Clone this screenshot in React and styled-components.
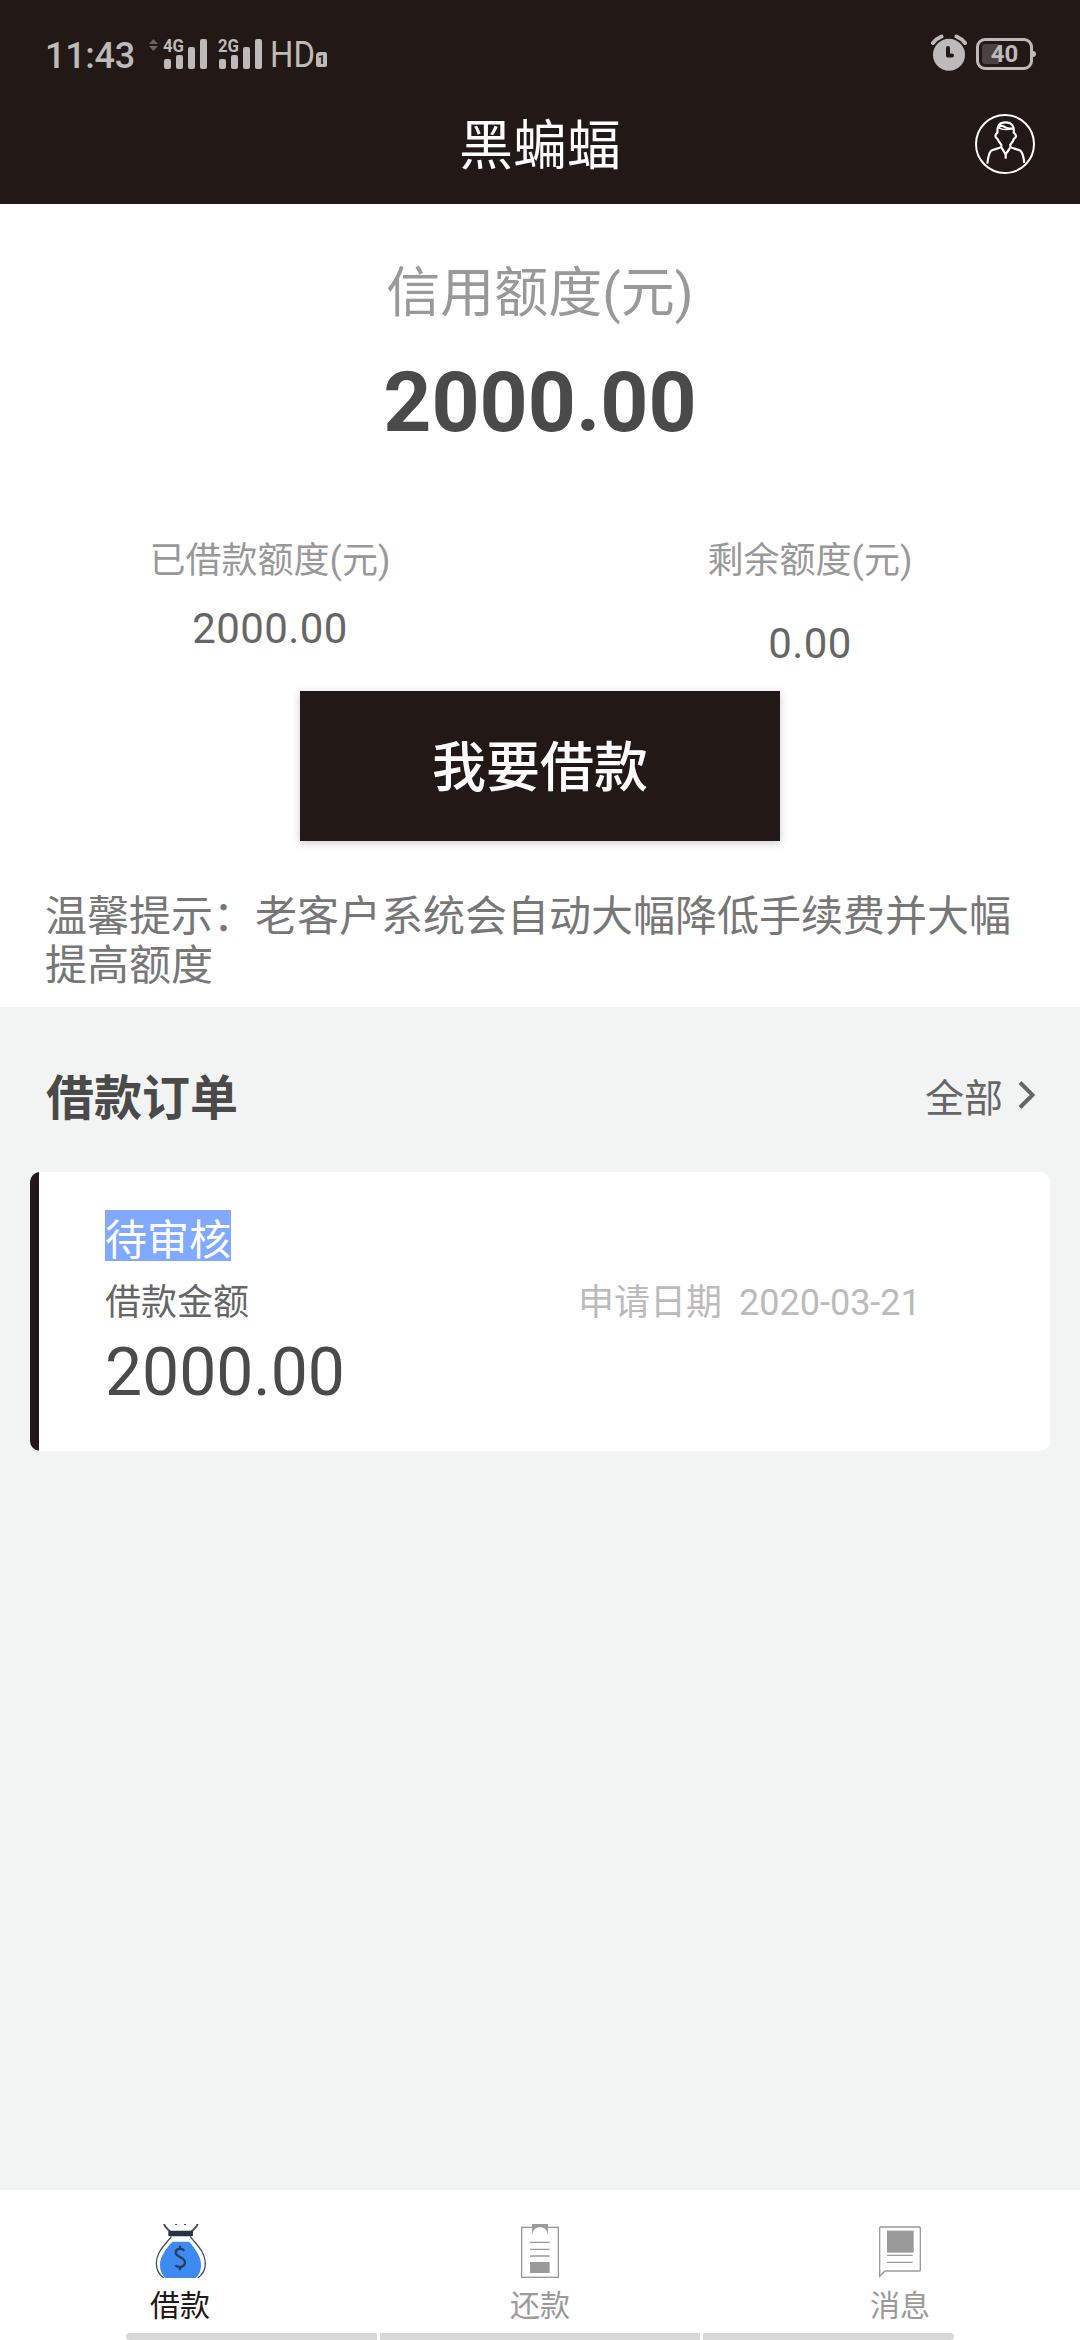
import React from "react";
import styled, { createGlobalStyle } from "styled-components";

const orders = [
  {
    status: "待审核",
    label: "借款金额",
    amount: "2000.00",
    dateLabel: "申请日期",
    date: "2020-03-21"
  }
];

const ProfileIcon = () => (
  <svg width="60" height="60" viewBox="225 282 180 180" fill="none" stroke="#fff">
    <circle cx="315" cy="372" r="87" strokeWidth="6" />
    <g strokeWidth="6.500" strokeLinejoin="round">
      <path d="M293 340 C289 316 300 307 317 307 C335 307 344 318 341 340" />
      <path d="M294 325 C299 315 308 316 316 322 C324 327 333 326 341 325" />
      <path d="M294 323 C303 328 320 331 341 326" strokeWidth="4" />
      <path d="M293 338 C283 344 285 353 292 356 C295 364 300 370 304 374 V382 L317 403 L331 382 V374 C336 369 340 363 342 356 C350 352 350 344 341 338" />
      <path d="M304 381 C296 387 284 386 274 392 C266 398 264 412 262 431" />
      <path d="M331 381 C339 387 351 386 361 392 C369 398 371 412 373 429" />
      <path d="M317 400 V416" />
    </g>
  </svg>
);

const SignalIcon = ({ label }) => (
  <svg width="45" height="36" viewBox="0 -4 45 36" fill="#bdbab9">
    <text
      x="0"
      y="13.5"
      fontSize="17.5"
      fontWeight="700"
      fontFamily="Roboto, sans-serif"
      textLength="21"
      lengthAdjust="spacingAndGlyphs"
    >
      {label}
    </text>
    <rect x="1" y="21" width="7" height="10" rx="2" />
    <rect x="13" y="17" width="7" height="14" rx="2" />
    <rect x="25" y="9" width="7" height="22" rx="2" />
    <rect x="37" y="1" width="7" height="30" rx="2" />
  </svg>
);

const DataArrows = () => (
  <svg width="9" height="12" viewBox="0 0 9 12" fill="#6a6462">
    <path d="M0 5 L4.5 0 L9 5 Z M0 7 H9 L4.5 12 Z" />
  </svg>
);

const HdIcon = () => (
  <svg width="54" height="46" viewBox="0 0 54 46" fill="#bdbab9">
    <text
      x="1"
      y="34"
      fontSize="36"
      fontFamily="Roboto, sans-serif"
      textLength="45"
      lengthAdjust="spacingAndGlyphs"
    >
      HD
    </text>
  </svg>
);

const AlarmIcon = () => (
  <svg width="36" height="38" viewBox="0 0 36 38">
    <circle cx="18" cy="20.7" r="16" fill="#bdbab9" />
    <path
      d="M2 9 Q5.500 4.500 10.500 2.500 M25.500 2.500 Q30.500 4.500 34 9"
      fill="none"
      stroke="#bdbab9"
      strokeWidth="4"
      strokeLinecap="round"
    />
    <path
      d="M17 14 V21.500 H21"
      fill="none"
      stroke="#221815"
      strokeWidth="4"
      strokeLinecap="round"
      strokeLinejoin="round"
    />
  </svg>
);

const ChevronIcon = () => (
  <svg width="18" height="28" viewBox="0 0 18 28" fill="none" stroke="#666" strokeWidth="4">
    <path d="M2 1.500 L14.500 14 L2 26.500" />
  </svg>
);

const BagIcon = () => (
  <svg width="54" height="54" viewBox="129 162 162 162">
    <path
      d="M187 215 H238 C256 238 273 258 273 284 C273 304 266 317 257 324 H167 C157 316 150 303 150 284 C150 258 168 238 187 215 Z"
      fill="#3d8bf2"
    />
    <g fill="none" stroke="#4a5058" strokeWidth="4">
      <path d="M184 200 C164 226 139 246 139 280 C139 302 148 315 162 324" />
      <path d="M241 200 C261 226 286 246 286 280 C286 302 277 315 263 324" />
      <path d="M162 162 C165 173 172 176 180 184 M263 162 C260 173 253 176 245 184" strokeWidth="6" />
      <path d="M195 163 H201 M222 163 H228" />
    </g>
    <rect x="175" y="182" width="74" height="17" rx="3" fill="#263442" />
    <path
      d="M223 242 C217 235 199 234 197 246 C196 263 226 259 225 279 C223 293 203 294 196 286 M210 227 V238 M210 290 V301"
      fill="none"
      stroke="#263c5c"
      strokeWidth="7"
    />
  </svg>
);

const ClipboardIcon = () => (
  <svg width="54" height="54" viewBox="99 162 162 162">
    <rect x="125" y="172" width="110" height="150" fill="none" stroke="#9a9a9a" strokeWidth="4" />
    <path d="M156 162 H204 V195 C202 180 192 171 180 171 C168 171 158 180 156 195 Z" fill="#9a9a9a" />
    <path d="M160 187 C163 176 171 172 180 172 C189 172 197 176 200 187 Z" fill="#fff" />
    <path d="M150 217 H209 M150 238 H209 M150 258 H209" stroke="#9a9a9a" strokeWidth="4" />
    <rect x="150" y="276" width="59" height="33" fill="#9a9a9a" />
  </svg>
);

const MessageIcon = () => (
  <svg width="54" height="54" viewBox="1179 162 162 162">
    <path
      d="M1199 319 V174 Q1199 171 1202 171 H1318 Q1321 171 1321 174 V300 Q1321 303 1318 303 H1215 Z"
      fill="none"
      stroke="#9a9a9a"
      strokeWidth="4"
    />
    <rect x="1221" y="182" width="80" height="66" fill="#9a9a9a" />
    <path d="M1221 256 H1298 M1221 277 H1298" stroke="#9a9a9a" strokeWidth="4" />
  </svg>
);

const tabs = [
  { title: "借款", icon: <BagIcon />, active: true },
  { title: "还款", icon: <ClipboardIcon /> },
  { title: "消息", icon: <MessageIcon /> }
];

const App = () => (
  <Page>
    <GlobalStyle />
    <StatusBar>
      <Clock>11:43</Clock>
      <Arrows>
        <DataArrows />
      </Arrows>
      <Signals>
        <SignalIcon label="4G" />
        <SignalIcon label="2G" />
      </Signals>
      <HdLabel>
        <HdIcon />
      </HdLabel>
      <SimBadge>1</SimBadge>
      <StatusRight>
        <AlarmIcon />
        <Battery>
          <BatteryLevel>40</BatteryLevel>
        </Battery>
      </StatusRight>
    </StatusBar>
    <Header>
      <span />
      <HeaderTitle>黑蝙蝠</HeaderTitle>
      <ProfileButton>
        <ProfileIcon />
      </ProfileButton>
    </Header>

    <Summary>
      <CreditLabel>信用额度(元)</CreditLabel>
      <CreditAmount>2000.00</CreditAmount>
      <Split>
        <SplitItem>
          <SplitLabel>已借款额度(元)</SplitLabel>
          <SplitValue>2000.00</SplitValue>
        </SplitItem>
        <SplitItem>
          <SplitLabel>剩余额度(元)</SplitLabel>
          <SplitValue $low>0.00</SplitValue>
        </SplitItem>
      </Split>
      <BorrowButton>我要借款</BorrowButton>
      <Notice>温馨提示：老客户系统会自动大幅降低手续费并大幅提高额度</Notice>
    </Summary>

    <Orders>
      <OrdersHeader>
        <OrdersTitle>借款订单</OrdersTitle>
        <AllLink>
          全部
          <ChevronIcon />
        </AllLink>
      </OrdersHeader>
      {orders.map(order => (
        <OrderCard key={order.date}>
          <OrderStatus>{order.status}</OrderStatus>
          <OrderRow>
            <OrderLabel>{order.label}</OrderLabel>
            <OrderDate>
              <span>{order.dateLabel}</span>
              <span>{order.date}</span>
            </OrderDate>
          </OrderRow>
          <OrderAmount>{order.amount}</OrderAmount>
        </OrderCard>
      ))}
    </Orders>

    <TabBar>
      {tabs.map(tab => (
        <Tab key={tab.title} $active={tab.active}>
          {tab.icon}
          <TabTitle>{tab.title}</TabTitle>
        </Tab>
      ))}
    </TabBar>
    <GestureBar>
      <GestureHint $left />
      <GestureHint />
      <GestureHint $right />
    </GestureBar>
  </Page>
);

const GlobalStyle = createGlobalStyle`
  body {
    margin: 0;
    background: #f2f4f3;
    font-family: Roboto, "Noto Sans CJK SC", sans-serif;
  }

  svg {
    display: block;
    flex: none;
  }
`;

const Page = styled.div`
  width: 1080px;
  height: 2340px;
  display: flex;
  flex-direction: column;
  overflow: hidden;
  background: #f2f4f3;
`;

const StatusBar = styled.div`
  height: 84px;
  box-sizing: border-box;
  padding: 0 45px;
  display: flex;
  align-items: flex-start;
  background: #221815;
  color: #bdbab9;
`;

const Clock = styled.div`
  width: 90px;
  margin-top: 35px;
  font-size: 36px;
  font-weight: 500;
  line-height: 42px;
  letter-spacing: -0.3px;
`;

const Arrows = styled.div`
  margin: 39px 0 0 14px;
`;

const Signals = styled.div`
  margin: 34px 0 0 5px;
  display: flex;
  gap: 10px;
`;

const HdLabel = styled.div`
  margin: 33px -7px 0 6px;
`;

const SimBadge = styled.div`
  width: 11px;
  height: 15px;
  margin-top: 52px;
  border-radius: 4px 2px 2px 2px;
  background: #bdbab9;
  color: #221815;
  font-size: 13px;
  font-weight: 700;
  line-height: 15px;
  text-align: center;
`;

const StatusRight = styled.div`
  margin: 34px 0 0 auto;
  display: flex;
  align-items: flex-start;
  gap: 9px;
`;

const Battery = styled.div`
  position: relative;
  box-sizing: border-box;
  width: 57px;
  height: 32px;
  margin: 4px 2px 0 0;
  padding: 3px;
  border: 3px solid #bdbab9;
  border-radius: 9px;

  &:after {
    content: "";
    position: absolute;
    right: -6px;
    top: 10px;
    width: 4px;
    height: 6px;
    border-radius: 0 3px 3px 0;
    background: #bdbab9;
  }
`;

const BatteryLevel = styled.div`
  height: 20px;
  border-radius: 3px;
  background: linear-gradient(to right, #4a4341 17px, transparent 17px);
  font-size: 24px;
  font-weight: 700;
  line-height: 21px;
  text-align: center;
`;

const Header = styled.div`
  height: 120px;
  box-sizing: border-box;
  padding: 0 45px;
  display: grid;
  grid-template-columns: 1fr auto 1fr;
  align-items: center;
  background: #221815;
`;

const HeaderTitle = styled.div`
  padding-top: 5px;
  color: #fff;
  font-size: 54px;
  line-height: 64px;
`;

const ProfileButton = styled.div`
  justify-self: end;
`;

const Summary = styled.div`
  height: 803px;
  box-sizing: border-box;
  padding: 58px 45px 0;
  background: #fff;
  text-align: center;
`;

const CreditLabel = styled.div`
  color: #999;
  font-size: 54px;
  line-height: 64px;
`;

const CreditAmount = styled.div`
  margin-top: 28px;
  color: #4a4a4a;
  font-size: 84px;
  font-weight: 700;
  line-height: 98px;
`;

const Split = styled.div`
  height: 151px;
  margin: 88px -45px 0;
  display: flex;
`;

const SplitItem = styled.div`
  flex: 1;
`;

const SplitLabel = styled.div`
  color: #999;
  font-size: 36px;
  line-height: 42px;
`;

const SplitValue = styled.div`
  margin-top: ${props => (props.$low ? 37 : 22)}px;
  color: #666;
  font-size: 42px;
  line-height: 50px;
  letter-spacing: 0.4px;
`;

const BorrowButton = styled.div`
  width: 480px;
  height: 150px;
  box-sizing: border-box;
  margin: 0 auto;
  padding-top: 6px;
  display: flex;
  align-items: center;
  justify-content: center;
  background: #221815;
  box-shadow: 0 2px 8px rgba(34, 24, 21, 0.22);
  color: #fff;
  font-size: 54px;
  font-weight: 500;
  line-height: 64px;
`;

const Notice = styled.div`
  margin-top: 51px;
  color: #777;
  font-size: 42px;
  line-height: 49px;
  text-align: left;
`;

const Orders = styled.div`
  flex: 1;
  padding: 0 30px;
`;

const OrdersHeader = styled.div`
  height: 165px;
  box-sizing: border-box;
  padding: 19px 15px 0;
  display: flex;
  align-items: center;
  justify-content: space-between;
`;

const OrdersTitle = styled.div`
  padding-left: 1px;
  color: #4a4a4a;
  font-size: 48px;
  font-weight: 700;
  line-height: 56px;
`;

const AllLink = styled.div`
  display: flex;
  align-items: center;
  gap: 15px;
  color: #666;
  font-size: 39px;
  line-height: 46px;

  svg {
    margin: -9px -1px 0 0;
  }
`;

const OrderCard = styled.div`
  height: 279px;
  box-sizing: border-box;
  padding: 38px 120px 0 75px;
  border-radius: 10px;
  background: linear-gradient(to right, #221815 9px, #fff 9px);
`;

const OrderStatus = styled.div`
  width: 126px;
  height: 51px;
  box-sizing: border-box;
  padding-top: 5px;
  background: #80a9ff;
  color: #fff;
  font-size: 42px;
  line-height: 51px;
`;

const OrderRow = styled.div`
  margin-top: 21px;
  display: flex;
  font-size: 36px;
  line-height: 42px;
`;

const OrderLabel = styled.div`
  width: 473px;
  color: #666;
`;

const OrderDate = styled.div`
  display: flex;
  gap: 17px;
  color: #bbb;
`;

const OrderAmount = styled.div`
  margin-top: 10px;
  color: #4a4a4a;
  font-size: 66px;
  line-height: 78px;
`;

const TabBar = styled.div`
  height: 143px;
  display: flex;
  background: #fff;
`;

const Tab = styled.div`
  flex: 1;
  padding-top: 34px;
  display: flex;
  flex-direction: column;
  align-items: center;
  color: ${props => (props.$active ? "#221815" : "#9a9a9a")};
`;

const TabTitle = styled.div`
  margin-top: 10px;
  font-size: 30px;
  line-height: 36px;
`;

const GestureBar = styled.div`
  height: 7px;
  padding: 0 126px;
  display: flex;
  gap: 3px;
  background: #fff;
`;

const GestureHint = styled.div`
  width: ${props => (props.$left || props.$right ? 251 : 320)}px;
  background: #d8d8d8;
  ${props => props.$left && "border-radius: 4px 0 0 4px;"}
  ${props => props.$right && "border-radius: 0 4px 4px 0;"}
`;

export default App;
